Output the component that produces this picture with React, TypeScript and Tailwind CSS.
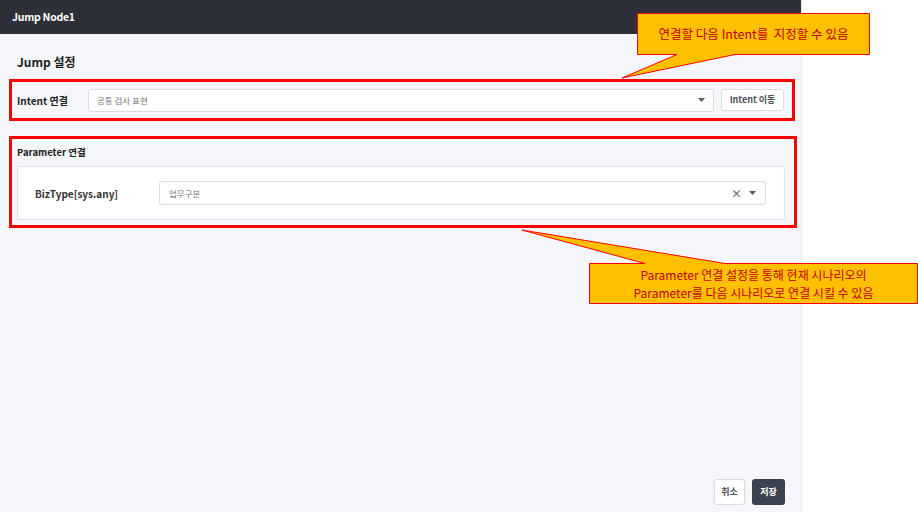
import React from "react";

const KR = { fontFamily: '"Noto Sans CJK KR", "Noto Sans", sans-serif' };

function Caret() {
  return (
    <svg width="7" height="4" viewBox="0 0 7 4">
      <path d="M0 0 L7 0 L3.5 4 Z" fill="#555b66" />
    </svg>
  );
}

export default function App() {
  return (
    <div className="relative w-[918px] h-[512px] bg-white overflow-hidden" style={KR}>
      <div className="w-[802px] h-[512px] flex flex-col border-r border-[#e3e6ec]">
        <div className="h-[34px] bg-[#2d3038] flex items-center px-[12px] shrink-0">
          <span className="text-white text-[10.5px] font-bold tracking-tight">Jump Node1</span>
          <span className="ml-auto mr-[8px] text-[#cfd3da] text-[12px]">✕</span>
        </div>
        <div className="flex-1 bg-[#f5f6fa] flex flex-col pl-[9px]">
          <div className="pt-[19px] pl-[8px] h-[45px] text-[12px] font-bold text-[#222] leading-[17px]">Jump 설정</div>
          <div className="w-[786px] h-[42px] border-[3px] border-[#ff0000] flex items-center pl-[5px] pr-[8px]">
            <span className="w-[71px] text-[10px] font-bold text-[#222]">Intent 연결</span>
            <div className="w-[626px] h-[23px] bg-white border border-[#d8dce3] rounded-[3px] flex items-center pl-[8px] pr-[8px]">
              <span className="text-[8.5px] text-[#777]">공통 검사 표현</span>
              <span className="ml-auto flex"><Caret /></span>
            </div>
            <div className="ml-[7px] w-[63px] h-[22px] bg-white border border-[#d8dce3] rounded-[3px] flex items-center justify-center text-[9px] font-bold text-[#4a505a]">
              Intent 이동
            </div>
          </div>
          <div className="mt-[15px] w-[788px] h-[92px] border-[3px] border-[#ff0000] flex flex-col pl-[5px] pr-[9px]">
            <div className="h-[27px] pt-[6px] text-[9.5px] font-bold text-[#222] leading-[14px]">Parameter 연결</div>
            <div className="h-[54px] bg-white border border-[#dde1e7] rounded-[3px] flex items-center pl-[17px] pr-[18px]">
              <span className="w-[124px] text-[10px] font-bold text-[#333]">BizType[sys.any]</span>
              <div className="flex-1 h-[24px] border border-[#d8dce3] rounded-[3px] flex items-center pl-[9px] pr-[9px]">
                <span className="text-[8.5px] text-[#777]">업무구분</span>
                <span className="ml-auto text-[11px] font-bold text-[#6b7079] leading-none mr-[7px]">×</span>
                <Caret />
              </div>
            </div>
          </div>
          <div className="flex-1" />
          <div className="flex justify-end gap-[7px] pr-[16px] pb-[7px]">
            <div className="w-[31px] h-[26px] bg-white border border-[#d8dce3] rounded-[3px] flex items-center justify-center text-[9px] font-bold text-[#555]">취소</div>
            <div className="w-[33px] h-[26px] bg-[#3d434e] rounded-[3px] flex items-center justify-center text-[9px] font-bold text-white">저장</div>
          </div>
        </div>
      </div>

      <svg className="absolute left-0 top-0 pointer-events-none" width="918" height="512">
        <polygon
          points="637.5,13.5 869.5,13.5 869.5,54.5 735,54.5 622,78 677,54.5 637.5,54.5"
          fill="#ffc000"
          stroke="#ff0000"
          strokeWidth="1"
        />
        <polygon
          points="589.5,263.5 645,263.5 522,230 725,263.5 917.5,263.5 917.5,303.5 589.5,303.5"
          fill="#ffc000"
          stroke="#ff0000"
          strokeWidth="1"
        />
      </svg>
      <div className="absolute left-[638px] top-[14px] w-[231px] h-[40px] flex items-center justify-center text-[12.5px] text-[#c00000]">
        연결할 다음 Intent를&nbsp; 지정할 수 있음
      </div>
      <div className="absolute left-[590px] top-[264px] w-[327px] h-[39px] flex flex-col items-center justify-center text-[12px] leading-[18px] text-[#c00000]">
        <span>Parameter 연결 설정을 통해 현재 시나리오의</span>
        <span>Parameter를 다음 시나리오로 연결 시킬 수 있음</span>
      </div>
    </div>
  );
}
